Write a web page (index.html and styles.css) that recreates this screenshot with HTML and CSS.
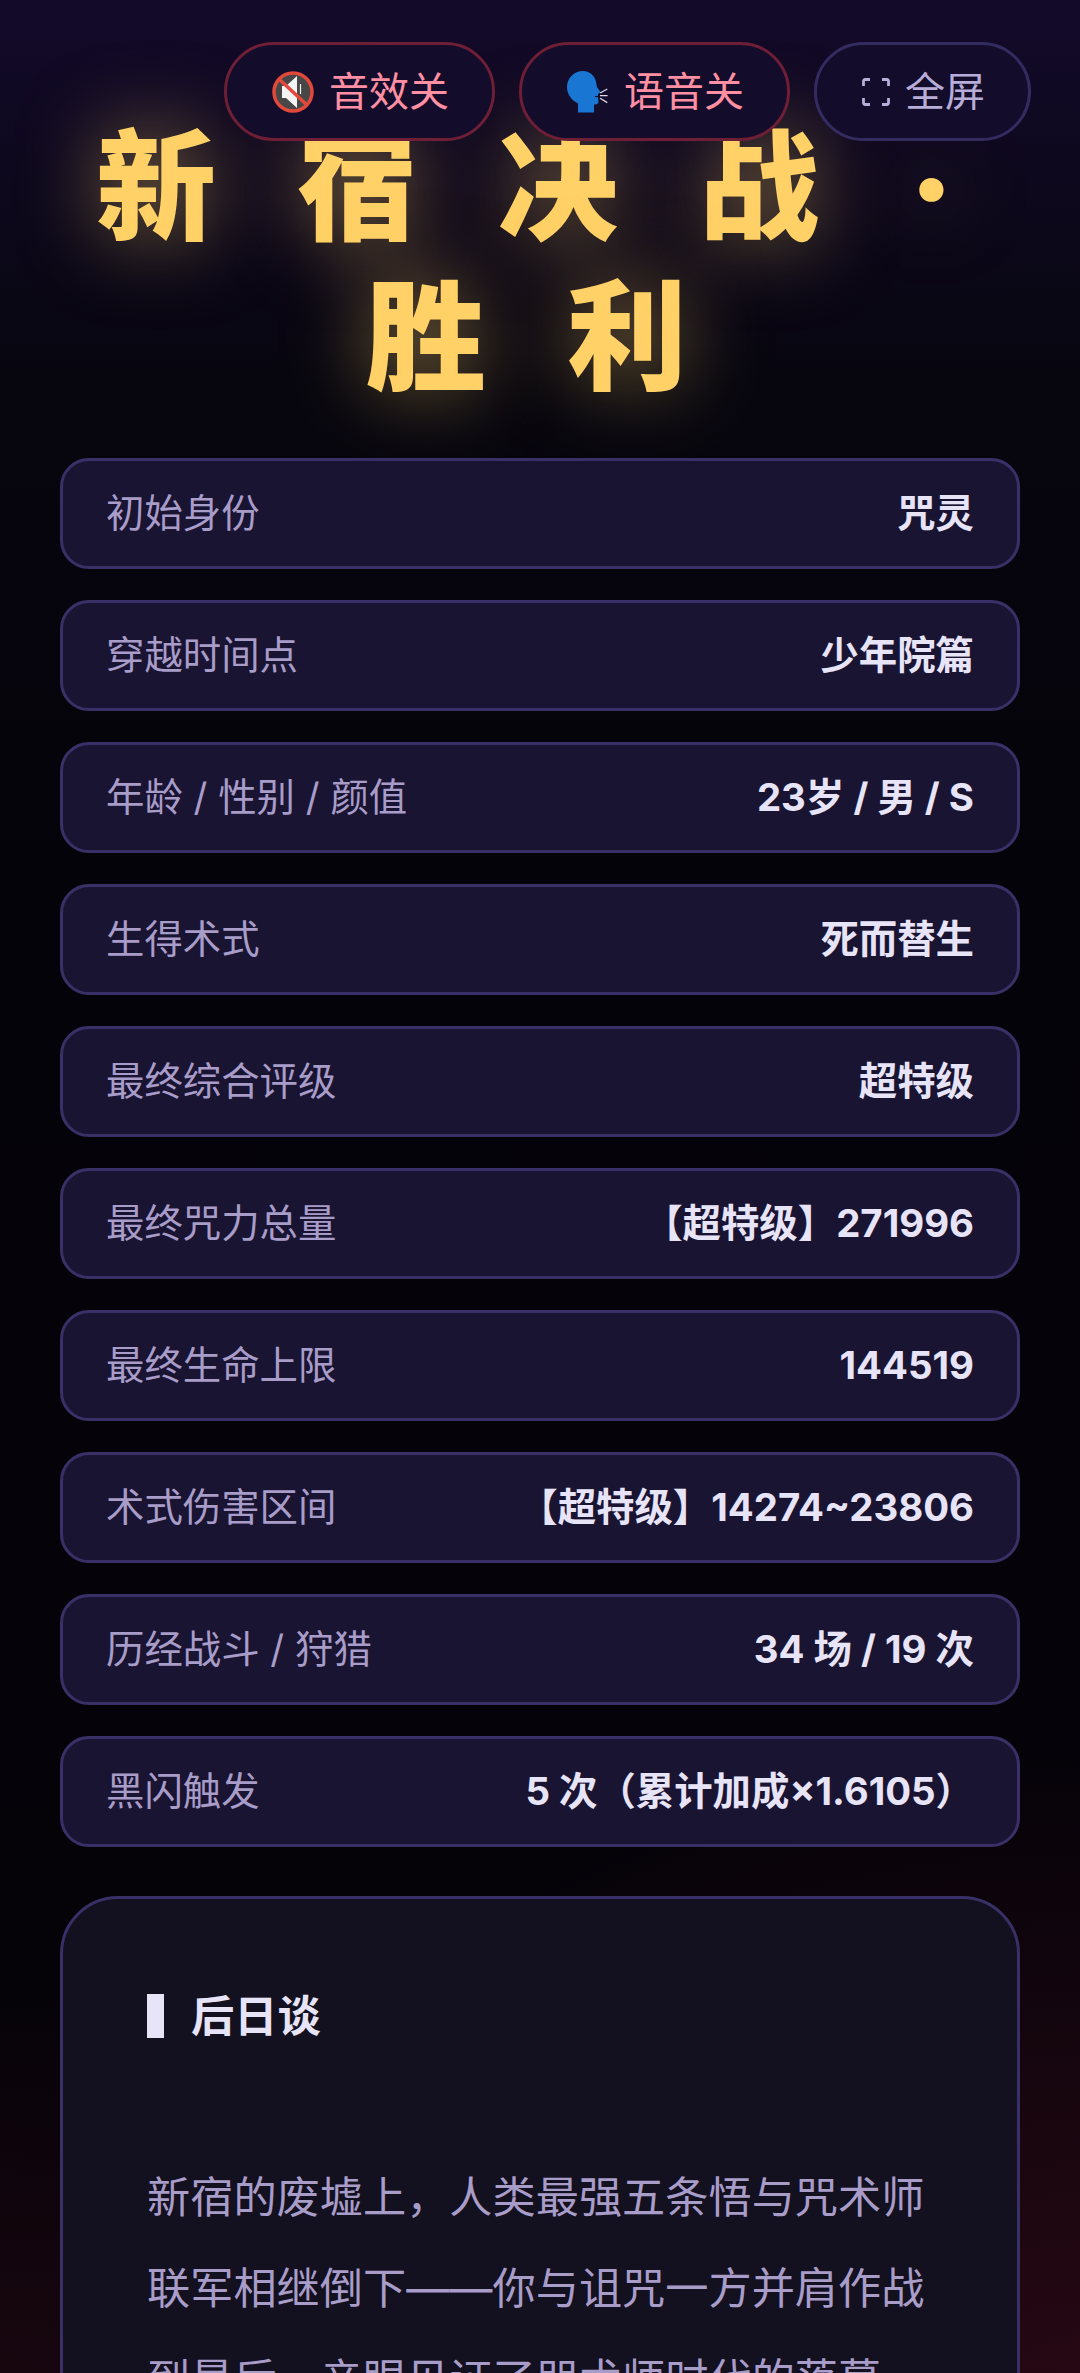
FILE: index.html
```html
<!DOCTYPE html>
<html lang="zh-CN">
<head>
    <meta charset="UTF-8">
    <meta name="viewport" content="width=device-width, initial-scale=1.0">
    <title>新宿决战 · 胜利</title>
    <link rel="stylesheet" href="styles.css">
</head>
<body>
    <!-- 顶部按钮 -->
    <div class="top-bar">
        <button class="top-btn top-btn-off">
            <svg class="btn-icon" viewBox="0 0 42 42">
                <circle cx="21" cy="21" r="19" fill="#474747" stroke="#e2493b" stroke-width="3.500"/>
                <path d="M10 15h4l11-10v32L14 27h-4z" fill="#f4f4f4"/>
                <path d="M28.500 13v10" stroke="#f4f4f4" stroke-width="1.200"/>
                <path d="M7 8l28 26" stroke="#e2493b" stroke-width="3.500"/>
            </svg>
            音效关
        </button>
        <button class="top-btn top-btn-off">
            <svg class="btn-icon" viewBox="0 0 42 42">
                <path d="M16 0c7 0 12 5 13 11l1 5 3.500 5-2.500 2v4l.5 3c0 2-1 3.500-3 3.500h-1.500v8H11v-9C4 29 0 23 0 16 0 7 7 0 16 0z" fill="#1976d2"/>
                <path d="M28 25.500h4" stroke="#130c2a" stroke-width="1.200"/>
                <path d="M33 22l7.300-4M33 24.600h7.600M33 27.300l7.300 4.300" stroke="#d8d8e8" stroke-width="1.300" fill="none"/>
            </svg>
            语音关
        </button>
        <button class="top-btn">
            <svg class="btn-icon btn-icon-small" viewBox="0 0 28 28">
                <path d="M8 1.500H3A1.500 1.500 0 0 0 1.500 3v5M20 1.500h5A1.500 1.500 0 0 1 26.500 3v5M8 26.500H3A1.500 1.500 0 0 1 1.500 25v-5M20 26.500h5a1.500 1.500 0 0 0 1.500-1.500v-5" stroke="#b8acd8" stroke-width="2.800" fill="none"/>
            </svg>
            全屏
        </button>
    </div>

    <div class="page">
        <h1 class="title">新宿决战<span class="title-dot">·</span><br>胜利</h1>

        <!-- 结算列表 -->
        <ul class="stats">
            <li class="stat-item"><span class="stat-label">初始身份</span><span class="stat-value">咒灵</span></li>
            <li class="stat-item"><span class="stat-label">穿越时间点</span><span class="stat-value">少年院篇</span></li>
            <li class="stat-item"><span class="stat-label">年龄 / 性别 / 颜值</span><span class="stat-value">23岁 / 男 / S</span></li>
            <li class="stat-item"><span class="stat-label">生得术式</span><span class="stat-value">死而替生</span></li>
            <li class="stat-item"><span class="stat-label">最终综合评级</span><span class="stat-value">超特级</span></li>
            <li class="stat-item"><span class="stat-label">最终咒力总量</span><span class="stat-value">【超特级】271996</span></li>
            <li class="stat-item"><span class="stat-label">最终生命上限</span><span class="stat-value">144519</span></li>
            <li class="stat-item"><span class="stat-label">术式伤害区间</span><span class="stat-value">【超特级】14274~23806</span></li>
            <li class="stat-item"><span class="stat-label">历经战斗 / 狩猎</span><span class="stat-value">34 场 / 19 次</span></li>
            <li class="stat-item"><span class="stat-label">黑闪触发</span><span class="stat-value">5 次（累计加成×1.6105）</span></li>
        </ul>

        <!-- 后日谈 -->
        <section class="epilogue">
            <h2 class="epilogue-title">后日谈</h2>
            <p class="epilogue-text">新宿的废墟上，人类最强五条悟与咒术师联军相继倒下——你与诅咒一方并肩作战到最后，亲眼见证了咒术师时代的落幕。</p>
        </section>
    </div>
</body>
</html>
```

FILE: styles.css
```css
* {
    margin: 0;
    padding: 0;
    box-sizing: border-box;
}
ul {
    list-style: none;
}
html {
    height: 2373px;
    overflow: hidden;
}
body {
    position: relative;
    height: 2373px;
    overflow: hidden;
    font-family: Inter, "Noto Sans CJK SC", sans-serif;
    line-height: 1.5;
    color: #e8e4f8;
    background:
        radial-gradient(ellipse 900px 620px at 100% 100%, #260814 0, rgba(38, 8, 20, 0) 100%),
        radial-gradient(ellipse 700px 380px at 0 100%, #18060f 0, rgba(24, 6, 15, 0) 100%),
        linear-gradient(180deg, #130a2a 0, #07060f 16%, #040309 40%, #060308 100%);
}

.top-bar {
    position: absolute;
    top: 42px;
    right: 49px;
    z-index: 2;
    display: flex;
    gap: 24px;
}
.top-btn {
    display: flex;
    align-items: center;
    gap: 15px;
    height: 99px;
    padding: 0 43px 0 45px;
    font-family: inherit;
    font-size: 40px;
    line-height: 1.5;
    color: #b8acd8;
    background: #130c2a;
    border: 3px solid #342c60;
    border-radius: 50px;
}
.top-btn-off {
    color: #ff8fa3;
    border-color: #6e1f36;
}
.btn-icon {
    width: 42px;
    height: 42px;
}
.btn-icon-small {
    width: 28px;
    height: 28px;
}

.page {
    padding: 113px 60px 0;
}
.title {
    margin: 0 -60px;
    padding-left: 54px;
    font-size: 120px;
    font-weight: 900;
    line-height: 150px;
    letter-spacing: 81px;
    text-align: center;
    color: #ffd166;
    text-shadow: 0 0 80px rgba(255, 209, 102, 0.5);
}
.title-dot {
    padding: 0 3px 0 9px;
}

.stats {
    display: flex;
    flex-direction: column;
    gap: 31px;
    margin-top: 45px;
}
.stat-item {
    display: flex;
    justify-content: space-between;
    align-items: center;
    height: 111px;
    padding: 0 43px;
    background: #1a1433;
    border: 3px solid #3a3068;
    border-radius: 29px;
}
.stat-label {
    font-size: 38.4px;
    color: #a89cc8;
}
.stat-value {
    font-size: 38.4px;
    font-weight: 700;
    color: #e8e4f8;
}

.epilogue {
    margin-top: 49px;
    padding: 95px 84px 0;
    height: 700px;
    background: #13101f;
    border: 3px solid #3a3068;
    border-radius: 58px;
}
.epilogue-title {
    padding-left: 27px;
    font-size: 43.2px;
    font-weight: 700;
    line-height: 44px;
    border-left: 17px solid #e8e4f8;
}
.epilogue-text {
    margin-top: 114px;
    font-size: 43.2px;
    line-height: 91px;
    color: #a89cc8;
}
```
